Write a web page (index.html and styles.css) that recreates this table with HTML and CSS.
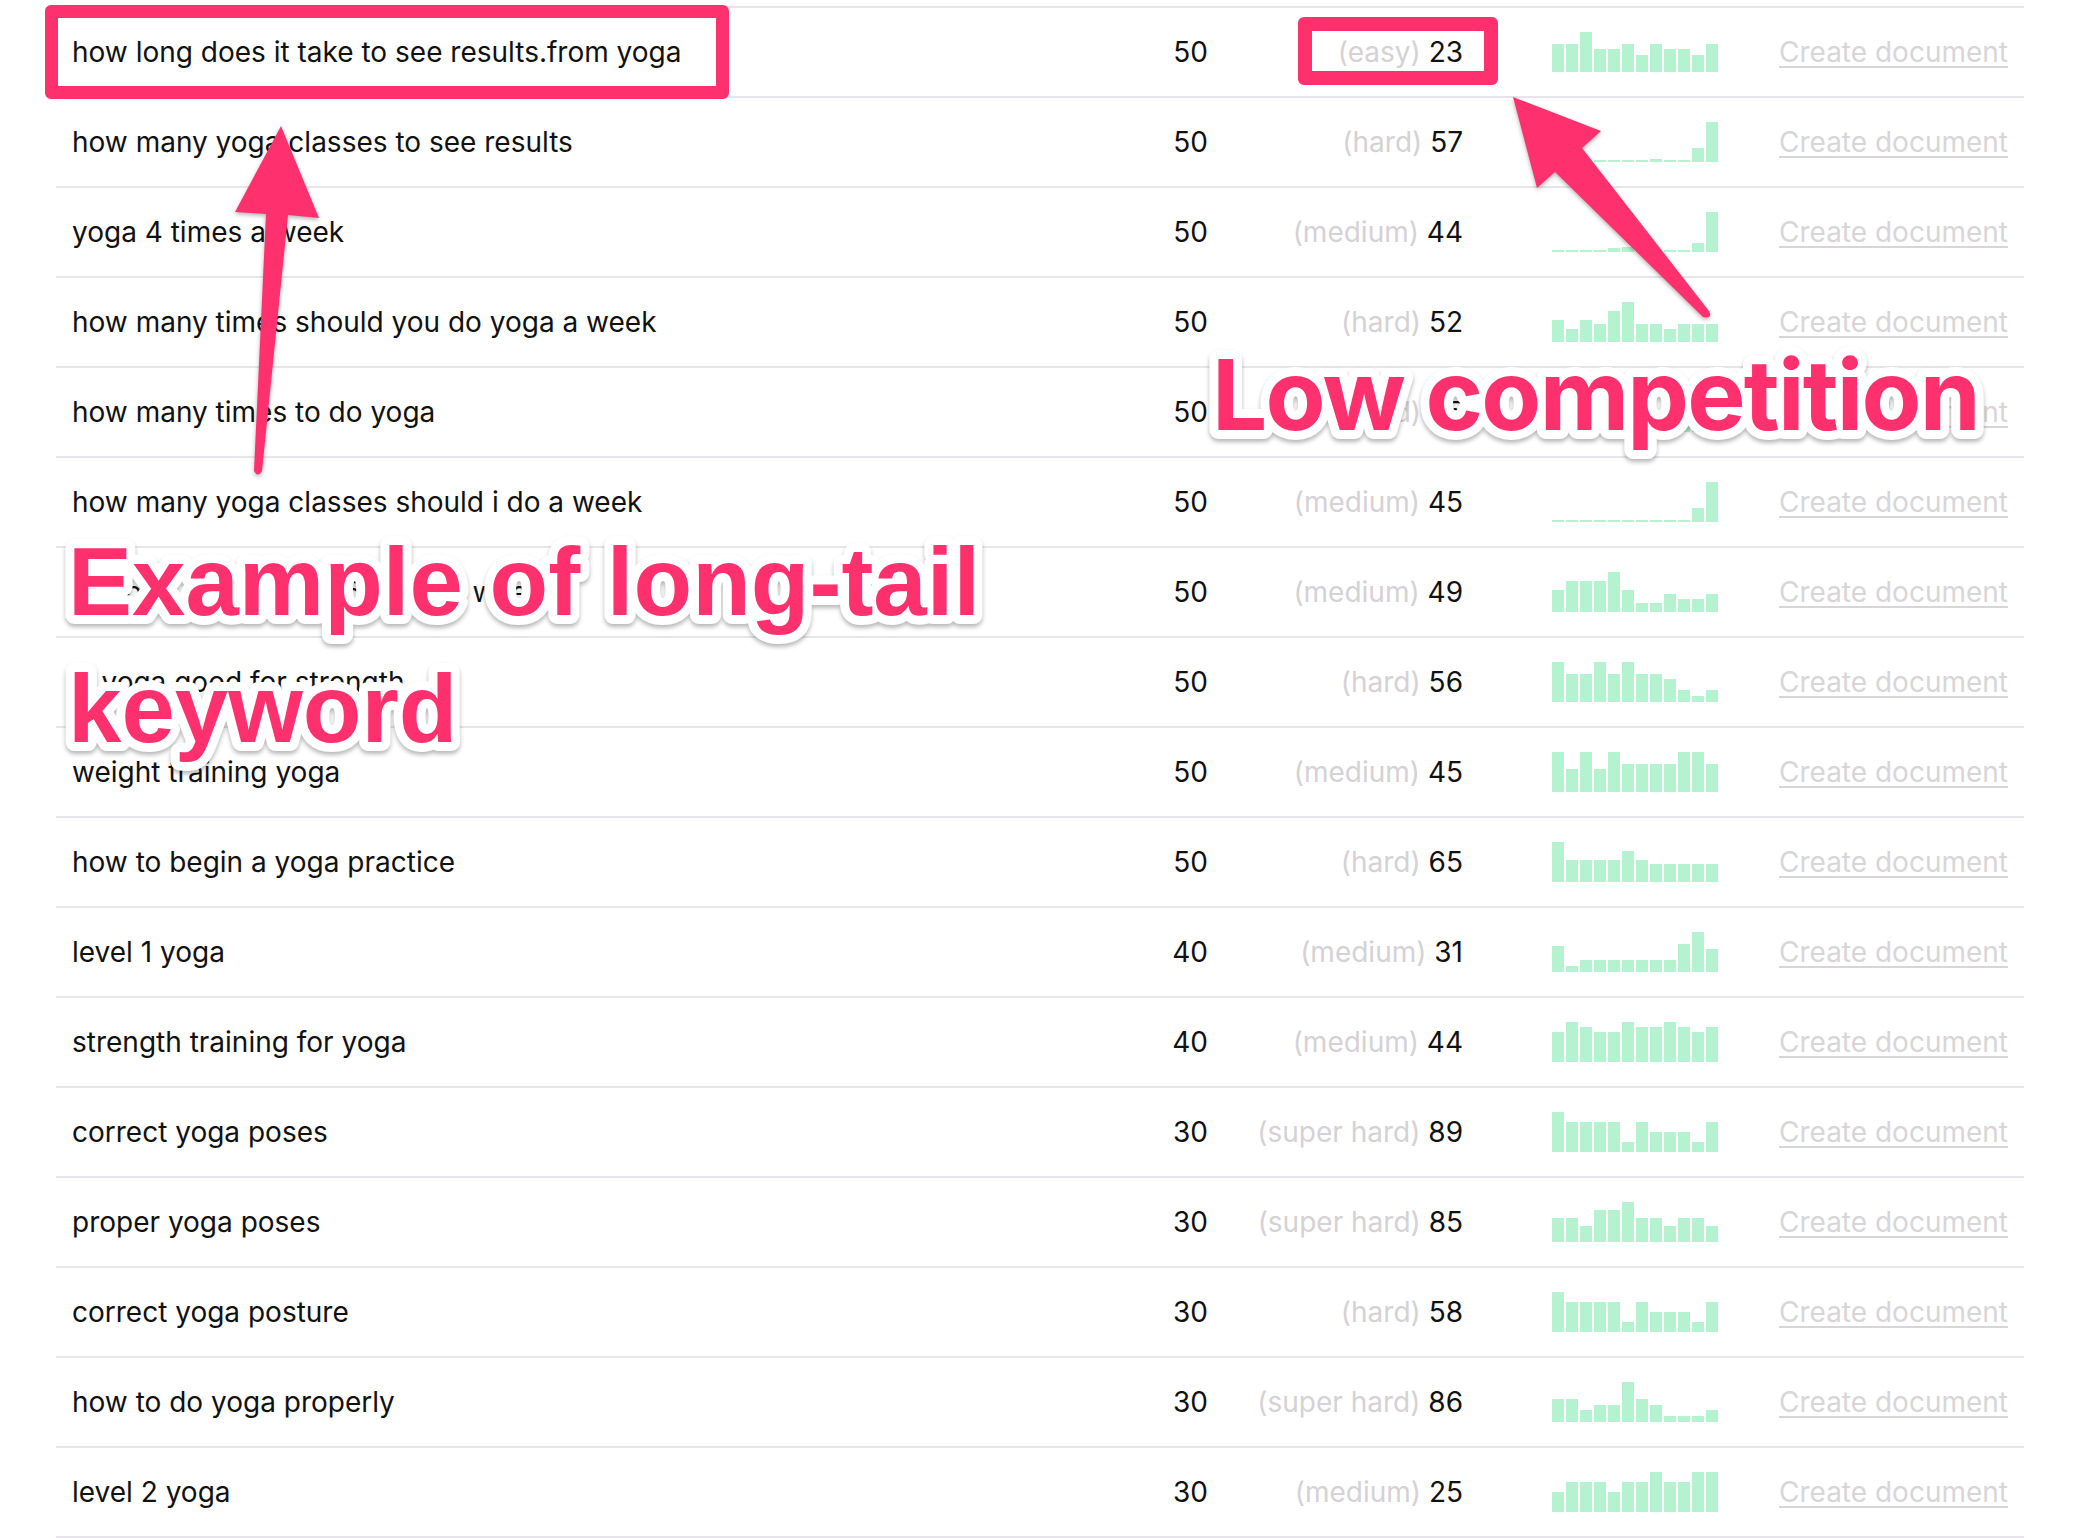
FILE: index.html
```html
<!DOCTYPE html>
<html lang="en">
<head>
<meta charset="utf-8">
<title>Keyword ideas</title>
<link rel="stylesheet" href="styles.css">
</head>
<body>
<div class="page">
  <div class="table">
    <div class="row"><span class="kw">how long does it take to see results.from yoga</span><span class="vol">50</span><span class="diff"><span class="lvl">(easy)</span> 23</span><span class="chart"><i style="height:28px"></i><i style="height:28px"></i><i style="height:40px"></i><i style="height:23px"></i><i style="height:23px"></i><i style="height:28px"></i><i style="height:17px"></i><i style="height:28px"></i><i style="height:23px"></i><i style="height:23px"></i><i style="height:17px"></i><i style="height:28px"></i></span><a class="link" href="#">Create document</a></div>
    <div class="row"><span class="kw">how many yoga classes to see results</span><span class="vol">50</span><span class="diff"><span class="lvl">(hard)</span> 57</span><span class="chart"><i style="height:2px"></i><i style="height:2px"></i><i style="height:2px"></i><i style="height:2px"></i><i style="height:2px"></i><i style="height:2px"></i><i style="height:2px"></i><i style="height:3px"></i><i style="height:2px"></i><i style="height:2px"></i><i style="height:14px"></i><i style="height:40px"></i></span><a class="link" href="#">Create document</a></div>
    <div class="row"><span class="kw">yoga 4 times a week</span><span class="vol">50</span><span class="diff"><span class="lvl">(medium)</span> 44</span><span class="chart"><i style="height:2px"></i><i style="height:2px"></i><i style="height:2px"></i><i style="height:2px"></i><i style="height:4px"></i><i style="height:5px"></i><i style="height:2px"></i><i style="height:2px"></i><i style="height:2px"></i><i style="height:2px"></i><i style="height:9px"></i><i style="height:40px"></i></span><a class="link" href="#">Create document</a></div>
    <div class="row"><span class="kw">how many times should you do yoga a week</span><span class="vol">50</span><span class="diff"><span class="lvl">(hard)</span> 52</span><span class="chart"><i style="height:22px"></i><i style="height:13px"></i><i style="height:22px"></i><i style="height:18px"></i><i style="height:31px"></i><i style="height:40px"></i><i style="height:18px"></i><i style="height:18px"></i><i style="height:13px"></i><i style="height:18px"></i><i style="height:18px"></i><i style="height:18px"></i></span><a class="link" href="#">Create document</a></div>
    <div class="row"><span class="kw">how many times to do yoga</span><span class="vol">50</span><span class="diff"><span class="lvl">(hard)</span> 55</span><span class="chart"><i style="height:30px"></i><i style="height:20px"></i><i style="height:30px"></i><i style="height:20px"></i><i style="height:40px"></i><i style="height:30px"></i><i style="height:20px"></i><i style="height:20px"></i><i style="height:30px"></i><i style="height:20px"></i><i style="height:20px"></i><i style="height:30px"></i></span><a class="link" href="#">Create document</a></div>
    <div class="row"><span class="kw">how many yoga classes should i do a week</span><span class="vol">50</span><span class="diff"><span class="lvl">(medium)</span> 45</span><span class="chart"><i style="height:2px"></i><i style="height:2px"></i><i style="height:2px"></i><i style="height:2px"></i><i style="height:2px"></i><i style="height:2px"></i><i style="height:2px"></i><i style="height:2px"></i><i style="height:2px"></i><i style="height:2px"></i><i style="height:14px"></i><i style="height:40px"></i></span><a class="link" href="#">Create document</a></div>
    <div class="row"><span class="kw">is it okay to do yoga 5 times a week</span><span class="vol">50</span><span class="diff"><span class="lvl">(medium)</span> 49</span><span class="chart"><i style="height:22px"></i><i style="height:31px"></i><i style="height:31px"></i><i style="height:31px"></i><i style="height:40px"></i><i style="height:22px"></i><i style="height:9px"></i><i style="height:9px"></i><i style="height:18px"></i><i style="height:13px"></i><i style="height:13px"></i><i style="height:18px"></i></span><a class="link" href="#">Create document</a></div>
    <div class="row"><span class="kw">is yoga good for strength</span><span class="vol">50</span><span class="diff"><span class="lvl">(hard)</span> 56</span><span class="chart"><i style="height:40px"></i><i style="height:28px"></i><i style="height:28px"></i><i style="height:40px"></i><i style="height:28px"></i><i style="height:40px"></i><i style="height:28px"></i><i style="height:28px"></i><i style="height:23px"></i><i style="height:12px"></i><i style="height:6px"></i><i style="height:12px"></i></span><a class="link" href="#">Create document</a></div>
    <div class="row"><span class="kw">weight training yoga</span><span class="vol">50</span><span class="diff"><span class="lvl">(medium)</span> 45</span><span class="chart"><i style="height:40px"></i><i style="height:23px"></i><i style="height:40px"></i><i style="height:23px"></i><i style="height:40px"></i><i style="height:28px"></i><i style="height:28px"></i><i style="height:28px"></i><i style="height:28px"></i><i style="height:40px"></i><i style="height:40px"></i><i style="height:28px"></i></span><a class="link" href="#">Create document</a></div>
    <div class="row"><span class="kw">how to begin a yoga practice</span><span class="vol">50</span><span class="diff"><span class="lvl">(hard)</span> 65</span><span class="chart"><i style="height:40px"></i><i style="height:22px"></i><i style="height:22px"></i><i style="height:22px"></i><i style="height:22px"></i><i style="height:31px"></i><i style="height:22px"></i><i style="height:18px"></i><i style="height:18px"></i><i style="height:18px"></i><i style="height:18px"></i><i style="height:18px"></i></span><a class="link" href="#">Create document</a></div>
    <div class="row"><span class="kw">level 1 yoga</span><span class="vol">40</span><span class="diff"><span class="lvl">(medium)</span> 31</span><span class="chart"><i style="height:26px"></i><i style="height:6px"></i><i style="height:12px"></i><i style="height:12px"></i><i style="height:12px"></i><i style="height:12px"></i><i style="height:12px"></i><i style="height:12px"></i><i style="height:12px"></i><i style="height:28px"></i><i style="height:40px"></i><i style="height:23px"></i></span><a class="link" href="#">Create document</a></div>
    <div class="row"><span class="kw">strength training for yoga</span><span class="vol">40</span><span class="diff"><span class="lvl">(medium)</span> 44</span><span class="chart"><i style="height:30px"></i><i style="height:40px"></i><i style="height:35px"></i><i style="height:30px"></i><i style="height:30px"></i><i style="height:40px"></i><i style="height:35px"></i><i style="height:35px"></i><i style="height:40px"></i><i style="height:35px"></i><i style="height:30px"></i><i style="height:35px"></i></span><a class="link" href="#">Create document</a></div>
    <div class="row"><span class="kw">correct yoga poses</span><span class="vol">30</span><span class="diff"><span class="lvl">(super hard)</span> 89</span><span class="chart"><i style="height:40px"></i><i style="height:30px"></i><i style="height:30px"></i><i style="height:30px"></i><i style="height:30px"></i><i style="height:10px"></i><i style="height:30px"></i><i style="height:20px"></i><i style="height:20px"></i><i style="height:20px"></i><i style="height:10px"></i><i style="height:30px"></i></span><a class="link" href="#">Create document</a></div>
    <div class="row"><span class="kw">proper yoga poses</span><span class="vol">30</span><span class="diff"><span class="lvl">(super hard)</span> 85</span><span class="chart"><i style="height:24px"></i><i style="height:24px"></i><i style="height:16px"></i><i style="height:32px"></i><i style="height:32px"></i><i style="height:40px"></i><i style="height:24px"></i><i style="height:24px"></i><i style="height:16px"></i><i style="height:24px"></i><i style="height:24px"></i><i style="height:16px"></i></span><a class="link" href="#">Create document</a></div>
    <div class="row"><span class="kw">correct yoga posture</span><span class="vol">30</span><span class="diff"><span class="lvl">(hard)</span> 58</span><span class="chart"><i style="height:40px"></i><i style="height:30px"></i><i style="height:30px"></i><i style="height:30px"></i><i style="height:30px"></i><i style="height:10px"></i><i style="height:30px"></i><i style="height:20px"></i><i style="height:20px"></i><i style="height:20px"></i><i style="height:10px"></i><i style="height:30px"></i></span><a class="link" href="#">Create document</a></div>
    <div class="row"><span class="kw">how to do yoga properly</span><span class="vol">30</span><span class="diff"><span class="lvl">(super hard)</span> 86</span><span class="chart"><i style="height:23px"></i><i style="height:23px"></i><i style="height:12px"></i><i style="height:17px"></i><i style="height:17px"></i><i style="height:40px"></i><i style="height:23px"></i><i style="height:17px"></i><i style="height:6px"></i><i style="height:6px"></i><i style="height:6px"></i><i style="height:12px"></i></span><a class="link" href="#">Create document</a></div>
    <div class="row"><span class="kw">level 2 yoga</span><span class="vol">30</span><span class="diff"><span class="lvl">(medium)</span> 25</span><span class="chart"><i style="height:20px"></i><i style="height:30px"></i><i style="height:30px"></i><i style="height:30px"></i><i style="height:20px"></i><i style="height:30px"></i><i style="height:30px"></i><i style="height:40px"></i><i style="height:30px"></i><i style="height:30px"></i><i style="height:40px"></i><i style="height:40px"></i></span><a class="link" href="#">Create document</a></div>
  </div>

  <div class="box box-kw"></div>
  <div class="box box-diff"></div>

  <svg class="overlay" width="2078" height="1538" viewBox="0 0 2078 1538">
    <g class="arrows">
      <path d="M281 126 L319 218 L288 215 L262 471 Q258 478 254 471 L266 214 L235 212 Z"/>
      <path d="M1513 97 L1601 131 L1582 148 L1709 311 Q1713 319 1703 317 L1555 172 L1537 188 Z"/>
    </g>
    <g class="labels">
      <text class="big big-low" x="1212" y="430">Low competition</text>
      <text class="big big-ex" x="68" y="615">Example of long-tail</text>
      <text class="big big-ex" x="68" y="742">keyword</text>
    </g>
  </svg>
</div>
</body>
</html>
```

FILE: styles.css
```css
html, body {
  margin: 0;
  padding: 0;
  background: #ffffff;
}

.page {
  position: relative;
  width: 2078px;
  height: 1538px;
  overflow: hidden;
  font-family: Inter, "Noto Sans", "Liberation Sans", sans-serif;
  color: #111111;
}

.table {
  margin: 6px 0 0 56px;
  width: 1968px;
  border-top: 2px solid #e7e5eb;
}

.row {
  box-sizing: border-box;
  display: grid;
  grid-template-columns: 1028px 108px 255px 255px 290px;
  align-items: center;
  height: 90px;
  padding: 0 16px;
  border-bottom: 2px solid #e7e5eb;
  font-size: 28px;
}

.kw {
  white-space: nowrap;
}

.vol,
.diff {
  text-align: right;
}

.lvl {
  color: #d5d1d5;
}

.chart {
  justify-self: end;
  display: flex;
  align-items: flex-end;
  gap: 2px;
  height: 40px;
}

.chart i {
  display: block;
  width: 12px;
  background: #b5f3d0;
}

.link {
  text-align: right;
  color: #d8d5d8;
  text-decoration: underline;
  text-decoration-thickness: 2px;
  text-underline-offset: 4px;
  text-decoration-color: #d8d5d8;
}

.box {
  position: absolute;
  box-sizing: border-box;
  border: 13px solid #ff306e;
  border-radius: 6px;
}

.box-kw {
  left: 45px;
  top: 5px;
  width: 684px;
  height: 94px;
}

.box-diff {
  left: 1298px;
  top: 17px;
  width: 200px;
  height: 68px;
  border-width: 14px;
}

.overlay {
  position: absolute;
  left: 0;
  top: 0;
  pointer-events: none;
}

.arrows path {
  fill: #ff306e;
  filter: drop-shadow(0 2px 2px rgba(0, 0, 0, 0.3));
}

.labels {
  filter: drop-shadow(0 3px 2px rgba(0, 0, 0, 0.28));
}

.big {
  fill: #ff306e;
  stroke: #ffffff;
  stroke-width: 18px;
  stroke-linejoin: round;
  paint-order: stroke fill;
}

.big-low {
  font-family: Inter, "Noto Sans", sans-serif;
  font-weight: 700;
  font-size: 98px;
  letter-spacing: -1.8px;
}

.big-ex {
  font-family: "Liberation Sans", Arial, sans-serif;
  font-weight: 700;
  font-size: 96px;
  letter-spacing: 0;
}
```
